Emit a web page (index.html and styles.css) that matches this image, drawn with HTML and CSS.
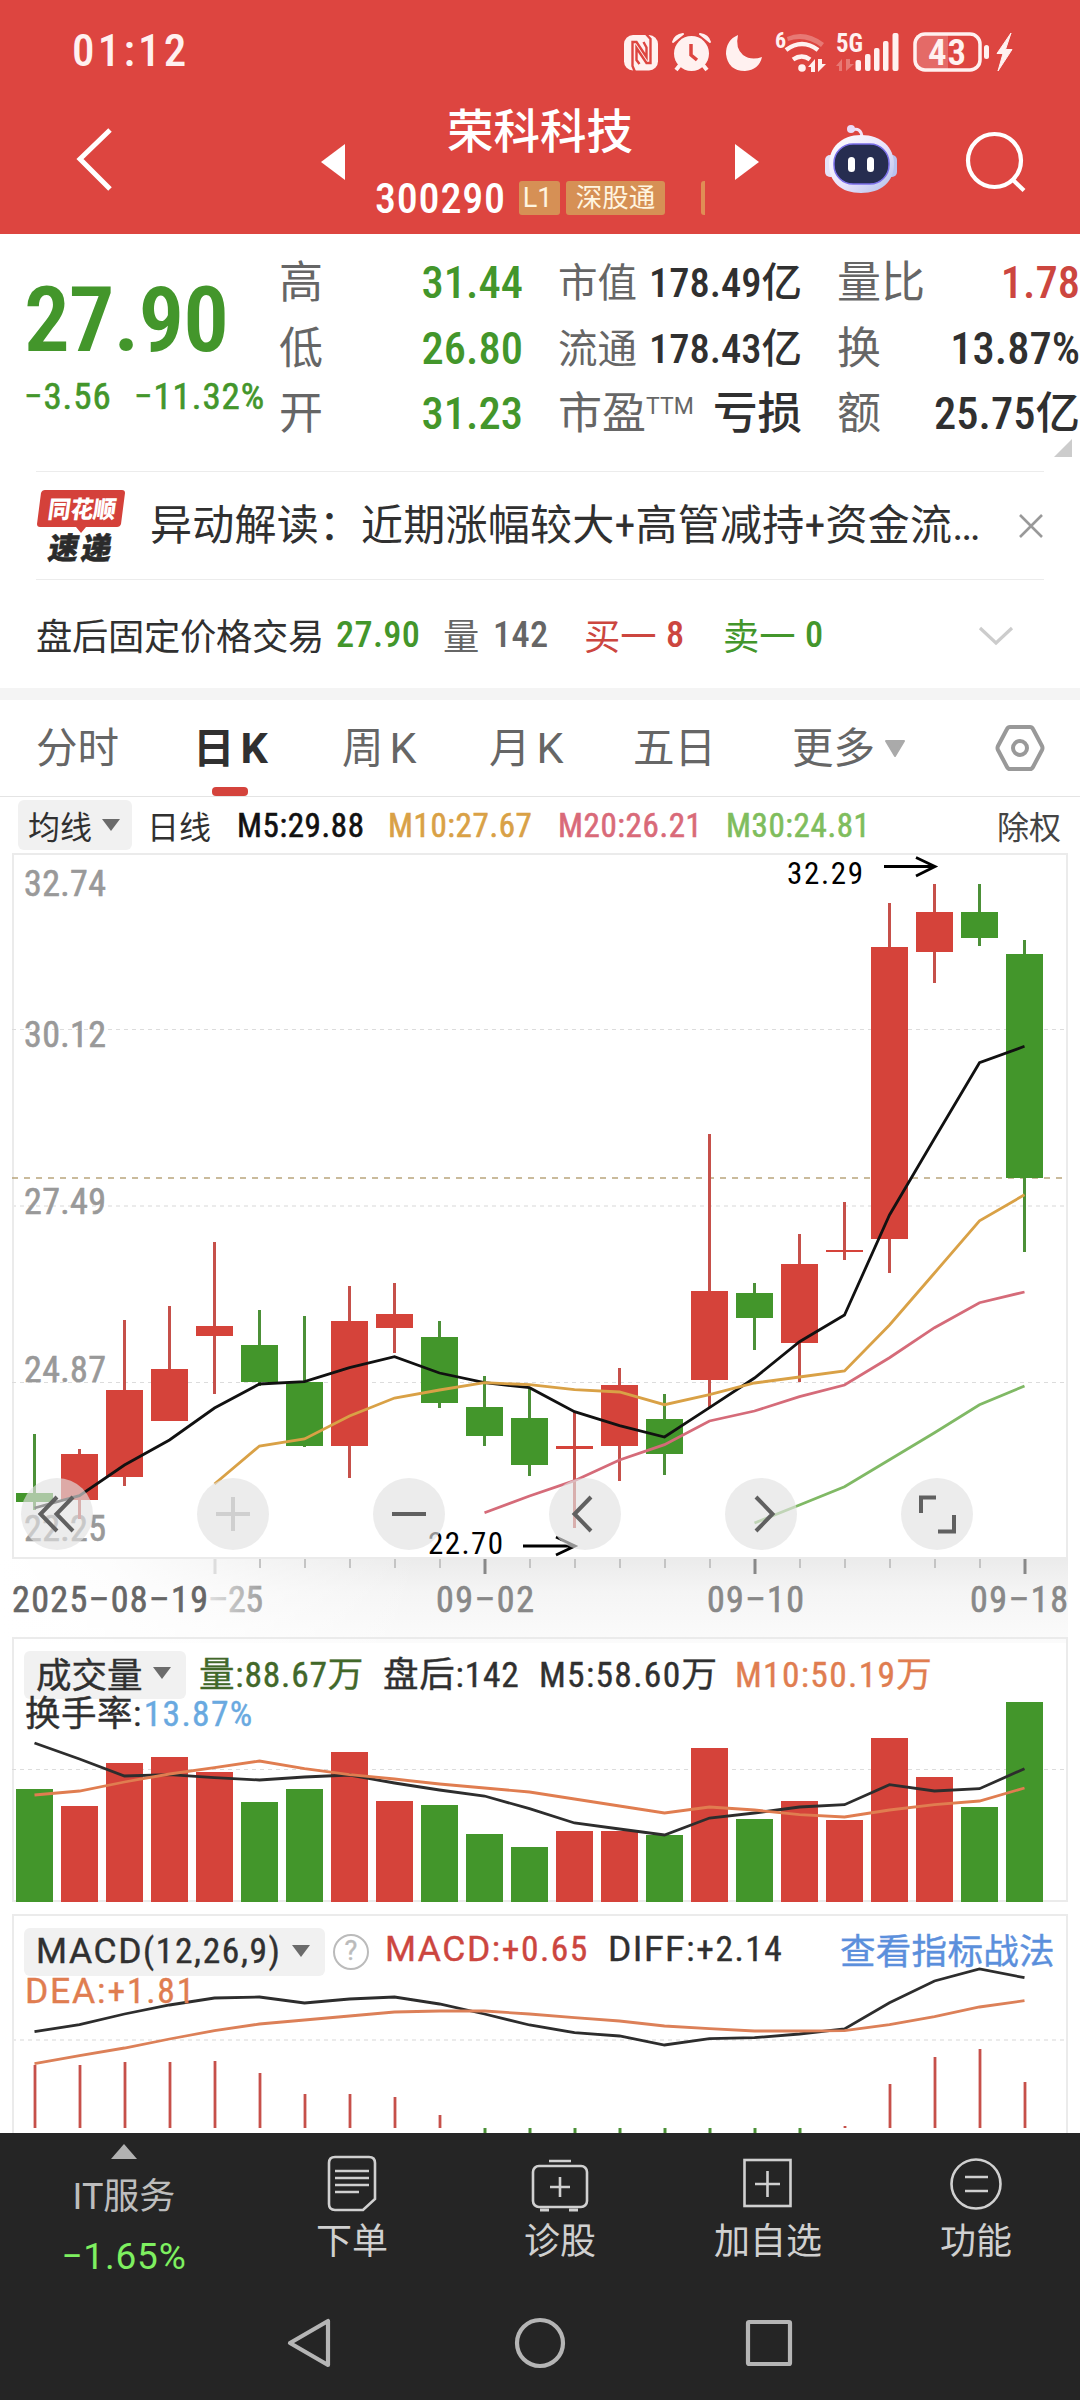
FILE: index.html
```html
<!DOCTYPE html>
<html lang="zh-CN">
<head>
<meta charset="utf-8">
<title>荣科科技 300290</title>
<link rel="stylesheet" href="styles.css">
</head>
<body>
<header class="header">
  <div class="status">
    <span class="clock">01:12</span>
    <svg class="status-icons" viewBox="620 28 400 48" width="400" height="48">
      <g fill="#fff1f0">
        <rect x="624" y="35" width="34" height="35.500" rx="9"/>
        <path d="M635 72L632.500 66V42h4l10 15v-9.500L643.500 42M645 33l5.500 6V63h-4l-10-15v12l3 4" fill="none" stroke="#dd4540" stroke-width="2.400"/>
        <circle cx="691.500" cy="53.500" r="17.500"/>
        <path d="M673 42q2-7 10-8zM710 42q-2-7-10-8z" stroke="#fff1f0" stroke-width="2" stroke-linejoin="round"/>
        <path d="M680 65l-4 5M703 65l4 5" stroke="#fff1f0" stroke-width="4" fill="none"/>
        <path d="M691 44v11l6 5" stroke="#dd4540" stroke-width="3.500" fill="none"/>
        <path d="M738 35q-3 13 5 20q8 6 19 2q-3 13-17 14q-17 0-19-17q0-14 12-19z"/>
        <path d="M787 37q18-8 37 6l-3 4q-16-12-33-6z" opacity=".3"/>
        <path d="M786 50q16-12 32 0M793 59.500q9-6 17 0" fill="none" stroke="#fff1f0" stroke-width="4.500"/>
        <circle cx="802" cy="68" r="3.800"/>
        <path d="M808 67l7-8v13h-4v-5zM818 59v13l8-8h-4v-5z"/>
        <path d="M836 66l6-7v12h-3v-5zM846 59v12l8-7h-4v-5z" opacity=".3"/>
        <rect x="855.500" y="60" width="5.500" height="11" rx="2"/>
        <rect x="865" y="54" width="5.500" height="17" rx="2"/>
        <rect x="874" y="48" width="5.500" height="23" rx="2"/>
        <rect x="883" y="41" width="5.500" height="30" rx="2"/>
        <rect x="892.500" y="33" width="6" height="38" rx="2"/>
        <rect x="916" y="35" width="32" height="34" opacity=".22"/>
        <rect x="915" y="34" width="65" height="36" rx="10" fill="none" stroke="#fff1f0" stroke-width="3.500"/>
        <rect x="984" y="45" width="5" height="14" rx="2.500"/>
        <path d="M1011 33L997 53.500h6L998 71l14-21.500h-6.500z" stroke="#fff1f0" stroke-width="1"/>
        <text x="775" y="48" font-size="22" font-weight="700">6</text>
        <text x="836" y="52" font-size="26" font-weight="700" textLength="27" lengthAdjust="spacingAndGlyphs">5G</text>
        <text x="928" y="64.500" font-size="37" font-weight="600" textLength="38" lengthAdjust="spacing">43</text>
      </g>
    </svg>
  </div>
  <div class="titlebar">
    <svg class="back" viewBox="0 0 40 68" width="40" height="68"><path d="M36 4L6 33L36 63" fill="none" stroke="#fff" stroke-width="5"/></svg>
    <svg class="prev" viewBox="0 0 24 36" width="24" height="36"><path d="M24 0v36L0 18z" fill="#fff"/></svg>
    <div class="stock">
      <div class="name">荣科科技</div>
      <div class="code-row"><span class="code">300290</span><span class="badge l1">L1</span><span class="badge sgt">深股通</span><span class="sliver"></span></div>
    </div>
    <svg class="next" viewBox="0 0 24 36" width="24" height="36"><path d="M0 0v36l24-18z" fill="#fff"/></svg>
    <svg class="robot" viewBox="0 0 72 70" width="72" height="70">
      <defs><linearGradient id="shell" x1="0" y1="0" x2="1" y2="1"><stop offset="0" stop-color="#fff"/><stop offset=".55" stop-color="#e8e2fa"/><stop offset="1" stop-color="#aebdea"/></linearGradient></defs>
      <path d="M27 6q9-3 10 7" fill="none" stroke="#f3e3f7" stroke-width="3"/><circle cx="26" cy="5" r="4" fill="#eadcf8"/>
      <rect x="0" y="31" width="11" height="22" rx="5" fill="#e5e2f8"/><rect x="61" y="31" width="11" height="22" rx="5" fill="#b9c2ee"/>
      <path d="M36 11C57 11 69 24 69 40C69 58 56 69 36 69C16 69 4 58 4 40C4 24 16 11 36 11z" fill="url(#shell)"/>
      <rect x="9" y="20" width="55" height="40" rx="19" fill="#262d50" stroke="#7a6ee8" stroke-width="1.500"/>
      <rect x="23" y="33" width="7" height="15" rx="3.500" fill="#fff"/><rect x="42" y="33" width="7" height="15" rx="3.500" fill="#fff"/>
    </svg>
    <svg class="search" viewBox="0 0 64 64" width="64" height="64"><g fill="none" stroke="#fff" stroke-width="4.200"><circle cx="30.500" cy="30.500" r="26.500"/><path d="M49 50L60 60.500"/></g></svg>
  </div>
</header>

<section class="quote">
  <div class="price-col">
    <div class="price">27.90</div>
    <div class="change"><span>−3.56</span><span>−11.32%</span></div>
  </div>
  <dl class="stats g">
    <div><dt>高</dt><dd>31.44</dd></div><div><dt>低</dt><dd>26.80</dd></div><div><dt>开</dt><dd>31.23</dd></div>
  </dl>
  <dl class="stats mid">
    <div class="sm"><dt>市值</dt><dd>178.49亿</dd></div><div class="sm"><dt>流通</dt><dd>178.43亿</dd></div><div><dt>市盈<sup>TTM</sup></dt><dd>亏损</dd></div>
  </dl>
  <dl class="stats">
    <div><dt>量比</dt><dd class="r">1.78</dd></div><div><dt>换</dt><dd>13.87%</dd></div><div><dt>额</dt><dd>25.75亿</dd></div>
  </dl>
  <i class="corner"></i>
</section>

<section class="news">
  <svg class="news-logo" viewBox="36 487 92 76" width="92" height="76">
    <path d="M45 489h77q3 0 3 3l-4 31q-1 3-4 3H86l-5 6l-5-6H40q-3 0-3-3l4-31q1-3 4-3z" fill="#d4413a"/>
    <text transform="translate(47 517) skewX(-8)" font-size="24" font-weight="900" fill="#fff" textLength="68" lengthAdjust="spacingAndGlyphs">同花顺</text>
    <text transform="translate(47 558) skewX(-10)" font-size="30" font-weight="900" fill="#2b2b2b" stroke="#2b2b2b" stroke-width=".6" textLength="63" lengthAdjust="spacing">速递</text>
  </svg>
  <div class="news-text">异动解读：近期涨幅较大+高管减持+资金流<em>…</em></div>
  <svg class="close" viewBox="0 0 26 26" width="26" height="26"><path d="M2 2L24 24M24 2L2 24" stroke="#999" stroke-width="2.600" fill="none"/></svg>
</section>

<section class="after">
  <span class="dk">盘后固定价格交易</span><b class="g">27.90</b><span>量</span><b>142</b><span class="r">买一</span><b class="r">8</b><span class="g">卖一</span><b class="g">0</b>
  <svg viewBox="0 0 36 22" width="36" height="22"><path d="M2 3L18 18L34 3" fill="none" stroke="#ccc" stroke-width="3.200"/></svg>
</section>

<nav class="tabs">
  <span>分时</span><span class="on">日<em>K</em></span><span>周<em>K</em></span><span>月<em>K</em></span><span>五日</span><span class="more">更多<svg viewBox="0 0 22 18" width="22" height="18"><path d="M2 1h18L11 16z" fill="#aaa" stroke="#aaa" stroke-width="2" stroke-linejoin="round"/></svg></span>
  <svg class="gear" viewBox="0 0 50 48" width="50" height="48"><g fill="none" stroke="#999" stroke-width="4"><path d="M15 3h20q2 0 3 2l9 17q1 2 0 4l-9 17q-1 2-3 2H15q-2 0-3-2L3 26q-1-2 0-4L12 5q1-2 3-2z"/><circle cx="25" cy="24" r="7"/></g></svg>
</nav>

<div class="legend">
  <span class="pill">均线<i class="caret"></i></span><span class="dk">日线</span><span class="k">M5:29.88</span><span class="o">M10:27.67</span><span class="p">M20:26.21</span><span class="lg">M30:24.81</span><span class="cq">除权</span>
</div>

<main class="charts">
  <svg id="charts" viewBox="0 853 1080 1280" width="1080" height="1280"></svg>

  <div class="tools">
    <button><svg viewBox="0 0 72 72"><path d="M36 19L19.500 36L36 53M52 19L35.500 36L52 53"/></svg></button>
    <button class="off"><svg viewBox="0 0 72 72"><path d="M36 19v34M19 36h34"/></svg></button>
    <button><svg viewBox="0 0 72 72"><path d="M19 36h34"/></svg></button>
    <button><svg viewBox="0 0 72 72"><path d="M42 19L25.500 36L42 53"/></svg></button>
    <button><svg viewBox="0 0 72 72"><path d="M31 19L47.500 36L31 53"/></svg></button>
    <button><svg viewBox="0 0 72 72"><path d="M20 35V19.500H35M53 37V53.500H37"/></svg></button>
  </div>

  <div class="panel-head vol">
    <div class="line"><span class="pill">成交量<i class="caret"></i></span><span class="dg">量:88.67万</span><span class="dk">盘后:142</span><span class="dk">M5:58.60万</span><span class="or">M10:50.19万</span></div>
    <div class="line2"><span class="dk">换手率:</span><span class="bl">13.87%</span></div>
  </div>

  <div class="panel-head macd">
    <div class="line"><span class="pill"><span><em>MACD</em>(12,26,9)</span><i class="caret"></i></span><span class="help">?</span><span class="r"><em>MACD:</em>+0.65</span><span class="dk"><em>DIFF:</em>+2.14</span><span class="link">查看指标战法</span></div>
    <div class="line2"><span class="or"><em>DEA:</em>+1.81</span></div>
  </div>
</main>

<footer class="footer">
  <div class="actions">
    <div class="sector"><i></i><span class="s1">IT服务</span><span class="s2">−1.65%</span></div>
    <div class="act"><svg viewBox="0 0 60 60" width="60" height="60"><g fill="none" stroke="#d0d0d0" stroke-width="2.600"><path d="M13 4h34q6 0 6 6v36L41 57H13q-6 0-6-6V10q0-6 6-6z"/><path d="M13 18h34M13 25h34M13 32h34M13 39h24"/></g></svg><span>下单</span></div>
    <div class="act"><svg viewBox="0 0 60 60" width="60" height="60"><g fill="none" stroke="#d0d0d0" stroke-width="2.600"><rect x="3" y="13" width="54" height="41" rx="6"/><path d="M19 8h22M30 24v20M20 34h20"/><path d="M10 57h9M39 57h9" stroke-width="3"/></g></svg><span>诊股</span></div>
    <div class="act"><svg viewBox="0 0 60 60" width="60" height="60"><g fill="none" stroke="#d0d0d0" stroke-width="2.600"><rect x="6.500" y="7" width="46" height="46"/><path d="M29.500 18v26M17 31h25"/></g></svg><span>加自选</span></div>
    <div class="act"><svg viewBox="0 0 60 60" width="60" height="60"><g fill="none" stroke="#d0d0d0" stroke-width="2.600"><circle cx="30" cy="31" r="24.500"/><path d="M19 24h23M19 38h23"/></g></svg><span>功能</span></div>
  </div>
  <div class="sysnav">
    <svg viewBox="0 0 52 52" width="52" height="52"><path d="M43 4v44L5 26z"/></svg>
    <svg viewBox="0 0 52 52" width="52" height="52"><circle cx="26" cy="26" r="23"/></svg>
    <svg viewBox="0 0 52 52" width="52" height="52"><rect x="5" y="5" width="42" height="42" rx="1"/></svg>
  </div>
</footer>
<script src="chart.js"></script>
</body>
</html>
```
FILE: styles.css
```css
* { box-sizing: border-box; }
body {
  margin: 0; width: 1080px; height: 2400px; overflow: hidden; background: #fff;
  font-family: "Roboto Condensed", "Noto Sans CJK SC", sans-serif; color: #666;
}
svg { display: block; flex: none; }
svg text { font-family: "Roboto Condensed", "Noto Sans CJK SC", sans-serif; }
dl, dd, dt { margin: 0; }
em { font-style: normal; }
.g { color: #43962b; } .r { color: #cc463f; } .k { color: #111; } .dk { color: #303030; }
.o { color: #d9a146; } .p { color: #d96a79; } .lg { color: #7fbd5d; } .or { color: #e07d50; }
.bl { color: #69a9e0; } .dg { color: #42682a; }

/* header */
.header { height: 234px; background: #dd4540; color: #fff; }
.status { height: 104px; display: flex; padding: 28px 60px 0 72px; justify-content: space-between; }
.clock { font-size: 45px; line-height: 46px; font-weight: 500; letter-spacing: 3.200px; color: #fff1f0; }
.titlebar { height: 130px; display: grid; align-items: start; padding-left: 74px;
  grid-template-columns: 247px 55px 359px 89px 138px auto; }
.back { margin-top: 22px; }
.prev, .next { margin-top: 40px; }
.robot { margin-top: 20px; margin-left: 1px; }
.search { margin-top: 26px; margin-left: 2px; }
.name { font-size: 46.500px; line-height: 56px; font-weight: 500; height: 68px; width: 328px; text-align: center; }
.code-row { display: flex; align-items: center; height: 52px; }
.code { font-size: 42px; font-weight: 500; letter-spacing: .8px; width: 143px; margin-left: -1px; margin-right: 1px; }
.badge { background: #d69055; height: 34px; line-height: 34px; border-radius: 3px; text-align: center; font-size: 26.500px; color: #fff5e0; }
.l1 { width: 41px; margin-right: 6px; font-family: Roboto; font-size: 27px; padding-right: 4px; }
.sgt { width: 99px; }
.sliver { width: 4px; height: 34px; margin-left: 36px; background: #e08e55; border-radius: 3px 0 0 3px; }

/* quote */
.quote { position: relative; height: 237px; padding: 17px 0 0 24px; display: grid;
  grid-template-columns: 255px 244px 244px 242px; }
.price { color: #43962b; font-size: 91px; line-height: 90px; margin-top: 24px; font-weight: 600; letter-spacing: -1px; }
.change { display: flex; color: #43962b; font-size: 37px; line-height: 50px; margin-top: 7px; letter-spacing: .9px; -webkit-text-stroke: .6px; white-space: nowrap; }
.change span:first-child { width: 110px; }
.stats { width: 244px; }
.stats + .stats { margin-left: 35px; }
.stats + .stats + .stats { margin-left: 70px; width: 243px; }
.stats > div { height: 65.500px; line-height: 65.500px; display: flex; justify-content: space-between; font-size: 44.500px; white-space: nowrap; }
.stats dt { color: #666; font-size: 44px; }
.stats dd { font-weight: 500; color: #303030; }
.stats.g dd { color: #43962b; }
.stats dd.r { color: #cc463f; }
.stats .sm { font-size: 40.500px; } .stats .sm dt { font-size: 39.500px; }
.stats sup { font: 23px/1 Roboto; vertical-align: 15px; }
.corner { position: absolute; right: 8px; bottom: 14px; border-style: solid; border-width: 0 0 18px 18px; border-color: transparent transparent #ccc; }

/* news */
.news { margin: 0 36px; height: 109px; border-top: 1.500px solid #ececec; border-bottom: 1.500px solid #ececec; display: flex; align-items: center; }
.news-text { margin-left: 22px; font-size: 42px; color: #303030; width: 846px; white-space: nowrap; line-height: 60px; letter-spacing: .22px; padding-top: 1px; }
.news-text em { font-family: Roboto; }
.close { margin-left: 23px; }

.after { height: 108px; padding: 0 0 0 36px; display: grid; align-items: center; font-size: 36.300px; white-space: nowrap;
  grid-template-columns: 300px 107px 50px 91px 82px 57px 82px 173px auto; }
.after span.dk { letter-spacing: -.3px; }
.after b { font-weight: 500; letter-spacing: .3px; padding-top: 1px; }
.after svg { margin-top: 3px; }

/* tabs */
.tabs { height: 109px; border-top: 12px solid #f4f4f4; border-bottom: 1.500px solid #e4e4e4; padding-left: 36px; display: grid; align-items: center;
  grid-template-columns: 157px 149px 147px 144px 159px 203px auto; font-size: 41.500px; line-height: 95px; white-space: nowrap; color: #666; }
.tabs > span { padding-top: 1px; }
.tabs em { font-family: Roboto; font-size: 43px; margin-left: 6px; }
.tabs .on { position: relative; color: #303030; font-weight: 700; }
.tabs .on::after { content: ""; position: absolute; left: 19px; bottom: 0; width: 36px; height: 9px; border-radius: 4px; background: #d4433c; }
.more { display: flex; align-items: center; gap: 9px; }

.legend { height: 56px; padding-left: 18px; display: grid; align-items: center; white-space: nowrap; font-size: 33px; -webkit-text-stroke: .6px;
  grid-template-columns: 129px 90px 151px 170px 168px 271px auto; letter-spacing: .6px; }
.legend .dk, .legend .pill, .legend .cq { -webkit-text-stroke: 0; font-size: 32px; color: #303030; letter-spacing: 0; }
.legend .cq { color: #444; }
.pill { display: flex; align-items: center; background: #f1f1f1; border-radius: 6px; color: #303030; }
.legend .pill { width: 114px; height: 50px; padding-left: 10px; gap: 10px; }
.caret { border-style: solid; border-width: 12px 9px 0; border-color: #6b6b6b transparent transparent; }

/* charts */
.charts { position: relative; height: 1280px; }
#charts text { stroke-width: .6px; }
.tools { position: absolute; left: 21px; top: 625px; display: flex; gap: 104px; }
.tools button { width: 72px; height: 72px; padding: 0; border: 0; border-radius: 50%; background: rgba(226,226,226,.65); }
.tools path { fill: none; stroke: #606060; stroke-width: 4; }
.tools .off path { stroke: #cfcfcf; }
.panel-head { position: absolute; left: 24px; width: 1040px; font-size: 35.500px; white-space: nowrap; -webkit-text-stroke: .4px; }
.panel-head .line { display: grid; align-items: center; height: 48px; }
.panel-head .line > span:not(.pill):not(.help) { position: relative; top: -3px; }
.panel-head .line2 { display: flex; height: 40px; line-height: 40px; margin-top: -3px; padding-left: 1px; }
.panel-head em { font-family: Roboto; }
.vol { top: 796px; }
.vol .line { grid-template-columns: 175px 184px 156px 196px auto; letter-spacing: .8px; }
.vol .line > :nth-child(n+4) { letter-spacing: 1.300px; }
.vol .pill { width: 162px; height: 48px; padding: 0 0 4px 12px; gap: 10px; letter-spacing: 0; }
.vol .line2 { letter-spacing: .5px; }
.vol .bl { margin-left: 2px; letter-spacing: 1.300px; }
.macd { top: 1073px; }
.macd .line { grid-template-columns: 309px 52px 223px 232px auto; }
.macd .line > .r, .macd .line > .dk { letter-spacing: 1.500px; }
.macd .or { letter-spacing: 1.800px; }
.macd .pill { width: 301px; height: 48px; padding: 0 0 2px 12px; gap: 10px; letter-spacing: 1.600px; }
.help { width: 36px; height: 36px; border: 2.500px solid #bbb; border-radius: 50%; color: #bbb; text-align: center; font: 27px/31px Roboto; }
.link { color: #5b8fdc; letter-spacing: .3px; }

/* footer */
.footer { height: 267px; background: #252525; }
.actions { display: grid; grid-template-columns: 248px repeat(4, 208px); height: 160px; font-size: 36px; color: #d0d0d0; }
.sector { display: flex; flex-direction: column; align-items: center; padding: 11px 0 0; }
.sector i { border-style: solid; border-width: 0 13px 15px; border-color: transparent transparent #b2b2b2; }
.s1 { font-family: Roboto, "Noto Sans CJK SC"; font-size: 36px; line-height: 48px; margin-top: 14px; color: #bdbdbd; }
.s2 { font-family: Roboto; font-size: 37px; line-height: 48px; color: #7ef060; margin-top: 12px; letter-spacing: .8px; }
.act { display: flex; flex-direction: column; align-items: center; padding-top: 20px; }
.act span { line-height: 48px; margin-top: 5px; }
.sysnav { display: flex; padding: 24px 0 0 285px; gap: 177px; }
.sysnav svg { fill: none; stroke: #b5b5b5; stroke-width: 4.200; stroke-linejoin: round; }
```
FILE: chart.js
```js
const NS = "http://www.w3.org/2000/svg";
const svg = document.getElementById("charts");
const RED = "#d5433a", GREEN = "#43962b";
const X = i => 34.5 + i * 45;

function add(tag, attrs, text) {
  const el = document.createElementNS(NS, tag);
  for (const k in attrs) el.setAttribute(k, attrs[k]);
  if (text) el.textContent = text;
  svg.appendChild(el);
  return el;
}
const line = (x1, y1, x2, y2, stroke, w, dash) =>
  add("line", { x1, y1, x2, y2, stroke, "stroke-width": w, "stroke-dasharray": dash || "none" });
const series = (start, ys, stroke) =>
  add("polyline", { points: ys.map((y, k) => X(start + k) + "," + y).join(" "), fill: "none", stroke, "stroke-width": 2.8 });
const label = (x, y, t, fill, w, size, stroke) =>
  add("text", { x, y, fill, stroke: stroke || fill, "font-size": size || 36, textLength: w, lengthAdjust: "spacing" }, t);

/* axis strip background */
const defs = add("defs", {});
defs.innerHTML =
  '<linearGradient id="down" x1="0" y1="0" x2="0" y2="1"><stop offset="0" stop-color="#ebebeb"/><stop offset=".4" stop-color="#f5f5f5"/><stop offset="1" stop-color="#fbfbfb"/></linearGradient>' +
  '<linearGradient id="side" x1="0" y1="0" x2="1" y2="0"><stop offset="0" stop-color="#fff"/><stop offset=".25" stop-color="#fff" stop-opacity=".9"/><stop offset="1" stop-color="#fff" stop-opacity="0"/></linearGradient>' +
  '<linearGradient id="fade" gradientUnits="userSpaceOnUse" x1="205" y1="0" x2="262" y2="0"><stop offset="0" stop-color="#e4e4e4"/><stop offset="1" stop-color="#a0a0a0"/></linearGradient>';
add("rect", { x: 0, y: 1559, width: 1068, height: 84, fill: "url(#down)" });
add("rect", { x: 0, y: 1559, width: 420, height: 84, fill: "url(#side)" });

/* frames and grid */
const frame = (y, h) => add("rect", { x: 13, y, width: 1054, height: h, fill: "none", stroke: "#ebebeb", "stroke-width": 2 });
frame(854, 704); frame(1638, 263); frame(1915, 240);
line(12, 1029.5, 1065, 1029.5, "#dcdcdc", 1, "4 4");
line(12, 1206, 1065, 1206, "#ebebeb", 2, "4 4");
line(12, 1382.5, 1065, 1382.5, "#dcdcdc", 1, "4 4");
line(12, 1769.5, 1065, 1769.5, "#dcdcdc", 1, "4 4");
line(12, 2040, 1065, 2040, "#ebebeb", 2, "4 4");
line(12, 1178, 1065, 1178, "#b9a57c", 1.6, "6 6");

/* price scale */
[["32.74", 896], ["30.12", 1047], ["27.49", 1214], ["24.87", 1382], ["22.25", 1541]]
  .forEach(([t, y]) => label(24, y, t, "#999", 82));

/* candles: body top, body bottom, wick top, wick bottom, up */
[[1493,1502,1434,1510,0],[1454,1500,1449,1519,1],[1390,1477,1320,1486,1],[1369,1421,1306,1421,1],
 [1326,1336,1242,1394,1],[1345,1382,1310,1386,0],[1382,1446,1316,1447,0],[1321,1446,1286,1478,1],
 [1314,1328,1283,1353,1],[1337,1403,1321,1408,0],[1407,1436,1376,1446,0],[1418,1465,1388,1476,0],
 [1446,1449,1412,1528,1],[1385,1446,1368,1481,1],[1419,1454,1394,1475,0],[1291,1380,1134,1408,1],
 [1293,1318,1283,1350,0],[1264,1343,1234,1382,1],[1250,1252,1202,1260,1],[947,1239,903,1273,1],
 [912,952,884,983,1],[912,938,884,946,0],[954,1178,940,1252,0]]
.forEach(([t, b, wt, wb, up], i) => {
  line(X(i), wt, X(i), wb, up ? "#c6504a" : "#4c9038", 3);
  add("rect", { x: X(i) - 18.5, y: t, width: 37, height: b - t, fill: up ? RED : GREEN });
});
series(0, [1508,1495.7,1465,1440,1408,1384,1381.7,1367.7,1356.7,1373,1382.7,1387.7,1411.7,1425.7,1437,1407.7,1378,1341.7,1315,1215,1138.5,1062.7,1046.3], "#111");
series(4, [1484,1446,1439,1416,1398,1390,1382.7,1384.7,1389.7,1392,1404.7,1394.7,1383,1377,1371,1325,1273,1220.8,1194.8], "#d9a146");
series(10, [1512.7,1496,1480.7,1460,1444.7,1421,1411,1396.7,1385,1357.7,1327.7,1302.7,1292], "#d56b79");
series(16, [1523,1505,1486.7,1459.7,1432.7,1404.7,1386], "#80b965");

/* high and low markers */
label(787, 884, "32.29", "#000", 76, 31, "none");
label(428, 1554, "22.70", "#000", 75, 31, "none");
add("path", { d: "M884 866.5H934M916 857.500L935 866.500L916 876M523 1546H574M556 1537L575 1546L556 1555", fill: "none", stroke: "#000", "stroke-width": 2.8 });

/* date axis */
for (let i = 4; i < 23; i++) {
  const major = i % 6 === 4;
  line(X(i) + .5, 1559, X(i) + .5, major ? 1574 : 1568, i === 4 ? "#ddd" : major ? "#888" : "#c4c4c4", major ? 3 : 2);
}
label(12, 1612, "2025–08–19", "#666", 196);
label(208, 1612, "–25", "url(#fade)", 55);
label(436, 1612, "09–02", "#888", 98);
label(707, 1612, "09–10", "#888", 97);
label(970, 1612, "09–18", "#888", 98);

/* volume */
[[1789,0],[1806,1],[1763,1],[1757,1],[1772,1],[1802,0],[1789,0],[1752,1],[1801,1],[1805,0],[1834,0],[1847,0],
 [1831,1],[1831,1],[1835,0],[1748,1],[1819,0],[1801,1],[1820,1],[1738,1],[1777,1],[1807,0],[1702,0]]
.forEach(([t, up], i) => add("rect", { x: X(i) - 18.5, y: t, width: 37, height: 1902 - t, fill: up ? RED : GREEN }));
series(0, [1743,1759,1776,1774.7,1777.7,1780,1777,1775,1783,1790,1796,1808.7,1823,1829,1835,1818,1813,1807,1804.7,1784.7,1791,1788.7,1768.7], "#2d2d2d");
series(0, [1795,1791,1782,1774,1767.7,1761,1768.7,1774.7,1779,1784,1788,1792,1799,1806,1813,1807,1810,1814.7,1817,1810,1804.7,1801,1788], "#e07d50");

/* MACD */
[2065,2065,2062,2062,2061,2073,2094,2094,2097,2115,0,0,0,0,0,0,0,0,2126,2084,2057,2049,2082]
.forEach((t, i) => t ? line(X(i) + .5, t, X(i) + .5, 2128, "#c6504a", 2.8) : line(X(i) + .5, 2128, X(i) + .5, 2133, "#4c9038", 3));
series(0, [2031.7,2024.7,2014,2005,1998,1997,2003,1999,1997,2004,2014,2025,2032.7,2036,2045,2038.7,2037.7,2034,2029,2002.7,1981,1969,1977.7], "#2d2d2d");
series(0, [2063.7,2055.7,2048,2039,2030.7,2024,2020,2016,2012,2011,2011,2014,2017.7,2021,2026,2028.7,2031,2031,2030.7,2024.7,2016.7,2007,2000.7], "#dc8058");
```
